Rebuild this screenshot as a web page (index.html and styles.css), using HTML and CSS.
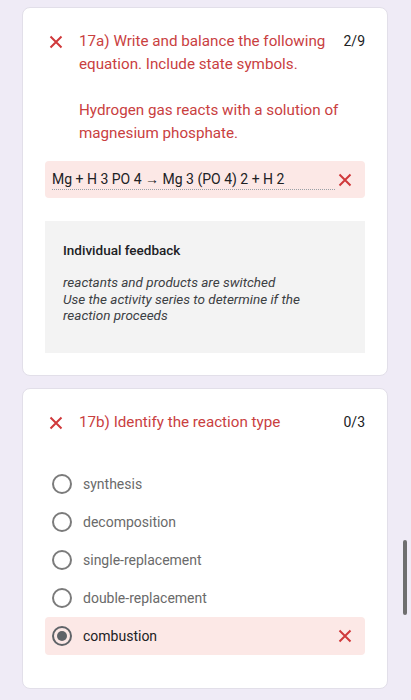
FILE: index.html
```html
<!DOCTYPE html>
<html lang="en">
<head>
<meta charset="utf-8">
<title>Quiz results</title>
<link rel="stylesheet" href="styles.css">
</head>
<body>
<main class="page">
  <section class="card">
    <div class="q-head">
      <svg class="x-icon head-x" viewBox="0 0 14 14"><path d="M1.5 1.5 L12.5 12.5 M12.5 1.5 L1.5 12.5"/></svg>
      <div class="q-title">17a) Write and balance the following equation. Include state symbols.<br><br>Hydrogen gas reacts with a solution of magnesium phosphate.</div>
      <div class="q-score">2/9</div>
    </div>
    <div class="answer wrong">
      <span class="answer-text">Mg + H 3 PO 4 → Mg 3 (PO 4) 2 + H 2</span>
      <svg class="x-icon" viewBox="0 0 14 14"><path d="M1.5 1.5 L12.5 12.5 M12.5 1.5 L1.5 12.5"/></svg>
    </div>
    <div class="feedback">
      <div class="fb-title">Individual feedback</div>
      <div class="fb-body">reactants and products are switched<br>Use the activity series to determine if the reaction proceeds</div>
    </div>
  </section>

  <section class="card card-choice">
    <div class="q-head">
      <svg class="x-icon head-x" viewBox="0 0 14 14"><path d="M1.5 1.5 L12.5 12.5 M12.5 1.5 L1.5 12.5"/></svg>
      <div class="q-title">17b) Identify the reaction type</div>
      <div class="q-score">0/3</div>
    </div>
    <ul class="options">
      <li class="option"><span class="radio"></span><span class="opt-text">synthesis</span></li>
      <li class="option"><span class="radio"></span><span class="opt-text">decomposition</span></li>
      <li class="option"><span class="radio"></span><span class="opt-text">single-replacement</span></li>
      <li class="option"><span class="radio"></span><span class="opt-text">double-replacement</span></li>
      <li class="option selected wrong"><span class="radio"><span class="dot"></span></span><span class="opt-text">combustion</span>
        <svg class="x-icon" viewBox="0 0 14 14"><path d="M1.5 1.5 L12.5 12.5 M12.5 1.5 L1.5 12.5"/></svg>
      </li>
    </ul>
  </section>
</main>
<div class="scrollbar"></div>
</body>
</html>
```

FILE: styles.css
```css
html, body {
  margin: 0;
  padding: 0;
}
body {
  background: #efebf6;
  font-family: Roboto, "Noto Sans", Arial, sans-serif;
  color: #202124;
  height: 700px;
  overflow: hidden;
}
.page {
  padding: 7px 23px 0 22px;
  display: flex;
  flex-direction: column;
  gap: 12px;
}
.card {
  background: #fff;
  border: 1px solid #e2dfe9;
  border-radius: 8px;
  padding: 22px 22px 22px;
}
.card-choice {
  padding-bottom: 33px;
}
.q-head {
  display: flex;
  align-items: flex-start;
  padding-left: 4px;
}
.x-icon {
  width: 14px;
  height: 14px;
  flex: none;
}
.x-icon path {
  stroke: #d0393b;
  stroke-width: 2;
  fill: none;
}
.head-x {
  margin-top: 5px;
  margin-right: 16px;
}
.q-title {
  flex: none;
  width: 262px;
  font-size: 15.2px;
  line-height: 23px;
  color: #c9403f;
}
.q-score {
  margin-left: auto;
  font-size: 14px;
  line-height: 23px;
  color: #202124;
}
.answer {
  margin-top: 16px;
  height: 37px;
  background: #fce8e6;
  border-radius: 4px;
  display: flex;
  align-items: center;
  padding: 0 13px 0 7px;
}
.answer-text {
  flex: none;
  width: 283px;
  font-size: 14px;
  line-height: 18px;
  color: #202124;
  border-bottom: 1px dotted #9aa0a6;
  padding-bottom: 1px;
  margin-top: 1px;
}
.answer .x-icon {
  margin-left: auto;
}
.feedback {
  margin-top: 23px;
  background: #f3f3f3;
  padding: 20px 40px 29px 18px;
}
.fb-title {
  font-size: 13.5px;
  font-weight: 500;
  line-height: 18px;
  color: #202124;
}
.fb-body {
  margin-top: 15px;
  font-size: 13.5px;
  font-style: italic;
  line-height: 16.5px;
  color: #3c4043;
}
.options {
  list-style: none;
  margin: 31px 0 0;
  padding: 0;
  display: flex;
  flex-direction: column;
}
.option {
  height: 38px;
  display: flex;
  align-items: center;
  padding: 0 13px 0 7px;
  border-radius: 4px;
}
.radio {
  width: 20px;
  height: 20px;
  box-sizing: border-box;
  border: 2px solid #7b7b7b;
  border-radius: 50%;
  display: flex;
  align-items: center;
  justify-content: center;
  flex: none;
}
.dot {
  width: 10px;
  height: 10px;
  border-radius: 50%;
  background: #5f6368;
}
.selected .radio {
  border-color: #5f6368;
}
.opt-text {
  margin-left: 11px;
  font-size: 14px;
  color: #6a6a6a;
}
.selected .opt-text {
  color: #202124;
}
.option.wrong {
  background: #fce8e6;
}
.option .x-icon {
  margin-left: auto;
}
.scrollbar {
  position: fixed;
  left: 403px;
  top: 540px;
  width: 4px;
  height: 75px;
  border-radius: 2px;
  background: #6f6f6f;
}
```
